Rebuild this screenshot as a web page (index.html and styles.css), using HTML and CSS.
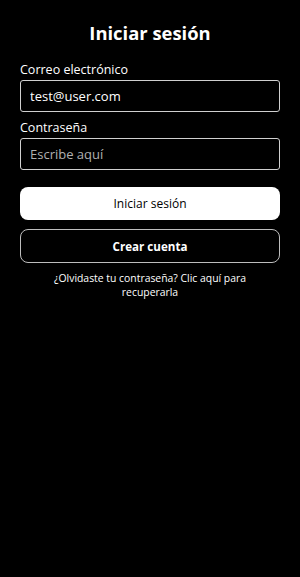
FILE: index.html
```html
<!DOCTYPE html>
<html lang="es">
<head>
<meta charset="utf-8">
<title>Iniciar sesión</title>
<link rel="stylesheet" href="styles.css">
</head>
<body>
<main class="login">
  <h1 class="login__title">Iniciar sesión</h1>
  <form class="login__form">
    <label class="field">
      <span class="field__label">Correo electrónico</span>
      <input class="field__input" type="email" value="test@user.com">
    </label>
    <label class="field">
      <span class="field__label">Contraseña</span>
      <input class="field__input" type="password" placeholder="Escribe aquí">
    </label>
    <div class="actions">
      <button type="button" class="btn btn--primary">Iniciar sesión</button>
      <button type="button" class="btn btn--outline">Crear cuenta</button>
    </div>
    <p class="login__help">¿Olvidaste tu contraseña? Clic aquí para recuperarla</p>
  </form>
</main>
</body>
</html>
```

FILE: styles.css
```css
* { box-sizing: border-box; }
html, body {
  margin: 0;
  background: #000;
  color: #fff;
  font-family: "Open Sans", "DejaVu Sans", sans-serif;
}
.login {
  padding: 21px 20px 0;
}
.login__title {
  margin: 0;
  text-align: center;
  font-size: 18.4px;
  font-weight: 700;
  line-height: 24px;
}
.login__form {
  display: flex;
  flex-direction: column;
  margin-top: 16px;
}
.field {
  display: flex;
  flex-direction: column;
  margin-bottom: 7px;
}
.field__label {
  font-size: 12.5px;
  line-height: 18px;
  margin-bottom: 1px;
}
.field__input {
  height: 32px;
  width: 100%;
  border: 1.5px solid #d0d0d0;
  border-radius: 3px;
  background: #000;
  color: #fff;
  padding: 0 9px;
  font-family: inherit;
  font-size: 13px;
  outline: none;
}
.field__input::placeholder {
  color: #b0b0b0;
}
.actions {
  display: flex;
  flex-direction: column;
  gap: 9px;
  margin-top: 10px;
}
.btn {
  width: 100%;
  border-radius: 8px;
  font-family: inherit;
  font-size: 12px;
  cursor: pointer;
}
.btn--primary {
  height: 33px;
  background: #fff;
  color: #000;
  border: 0;
}
.btn--outline {
  height: 34px;
  background: #000;
  color: #fff;
  border: 1px solid #bdbdbd;
  font-weight: 700;
  font-size: 11.6px;
}
.login__help {
  margin: 8px 0 0;
  padding: 0 24px;
  text-align: center;
  font-size: 10.4px;
  line-height: 14px;
}
```
